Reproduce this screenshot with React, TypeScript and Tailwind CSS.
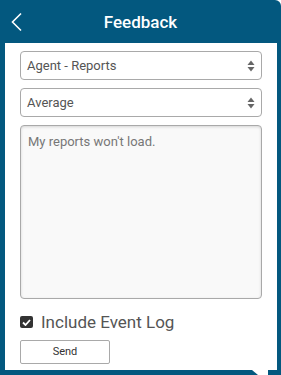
const SelectBox = ({ value }: { value: string }) => (
  <div className="flex h-[29px] items-center justify-between rounded-[4px] border border-[#a9a9a9] bg-white pl-[6px] pr-[6px]">
    <span className="text-[13px] text-[#555]">{value}</span>
    <svg width="8" height="12" viewBox="0 0 8 12" className="text-[#666]">
      <path d="M4 0.5 L7.5 5 L0.5 5 Z" fill="currentColor" />
      <path d="M4 11.5 L7.5 7 L0.5 7 Z" fill="currentColor" />
    </svg>
  </div>
);

export default function App() {
  return (
    <div className="relative h-[375px] w-[281px] overflow-hidden rounded-tr-[6px] bg-[#03587f] font-['Roboto',sans-serif]">
      <header className="relative flex h-[43px] items-center justify-center pt-[3px]">
        {/* back chevron */}
        <svg className="absolute left-[10px] top-[12px]" width="14" height="20" viewBox="0 0 14 20">
          <path d="M11 1.5 L2.5 10 L11 18.5" stroke="white" strokeWidth="1.6" fill="none" />
        </svg>
        <h1 className="text-[17px] font-medium text-white">Feedback</h1>
      </header>

      <main className="ml-[5px] mr-[4px] flex h-[327px] flex-col gap-[8px] bg-white px-[15px] pt-[8px]">
        <SelectBox value="Agent - Reports" />
        <SelectBox value="Average" />
        <div className="h-[174px] rounded-[4px] border border-[#a9a9a9] bg-[#f9f9f9] px-[7px] py-[6px] text-[13px] text-[#777] shadow-[inset_0_1px_3px_rgba(0,0,0,0.15)]">
          My reports won't load.
        </div>

        <label className="mt-[5px] flex items-center gap-[8px]">
          <span className="flex h-[12px] w-[13px] items-center justify-center rounded-[2px] bg-[#333]">
            <svg width="9" height="7" viewBox="0 0 9 7">
              <path d="M1 3.5 L3.5 6 L8 1" stroke="white" strokeWidth="1.8" fill="none" />
            </svg>
          </span>
          <span className="text-[17px] leading-[20px] text-[#555]">Include Event Log</span>
        </label>

        <button className="h-[24px] w-[90px] rounded-[2px] border border-[#a9a9a9] bg-white text-[11px] text-[#333]">
          Send
        </button>
      </main>

      <div className="absolute bottom-0 left-[252px] h-0 w-0 border-l-[6px] border-r-[6px] border-t-[5px] border-l-transparent border-r-transparent border-t-white" />
      <div className="absolute bottom-0 left-[258px] h-[5px] w-[10px] bg-white" />
    </div>
  );
}
